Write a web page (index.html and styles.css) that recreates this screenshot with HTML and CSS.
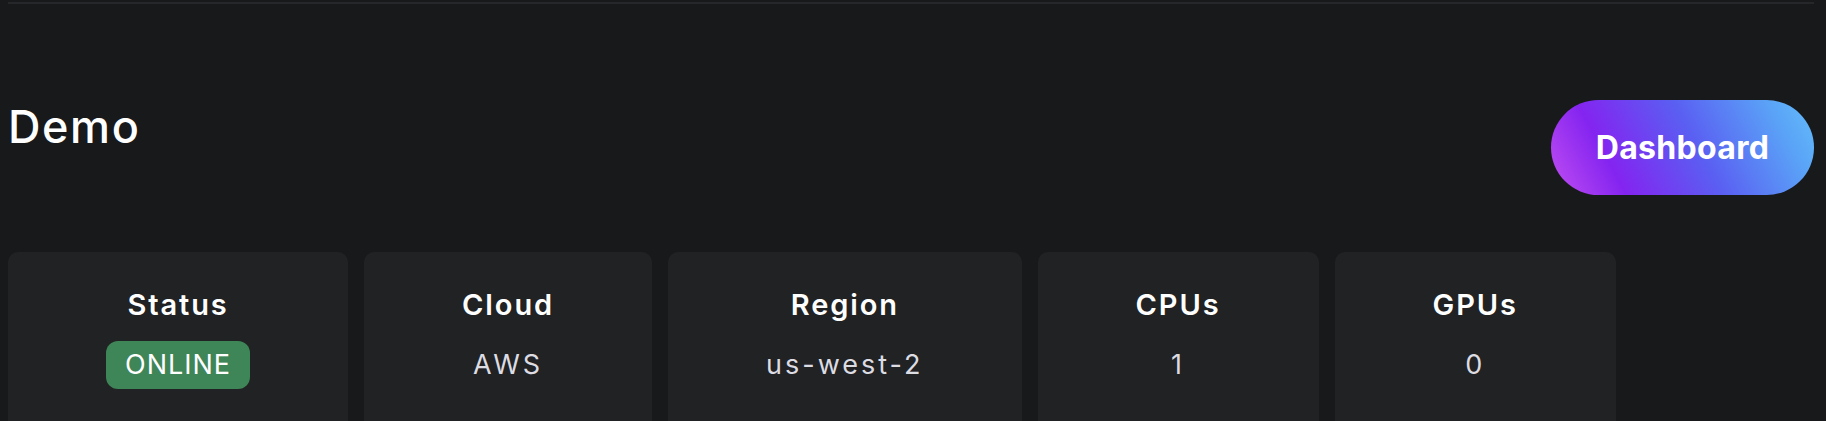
FILE: index.html
```html
<!DOCTYPE html>
<html lang="en">
<head>
<meta charset="utf-8">
<title>Demo</title>
<link rel="stylesheet" href="styles.css">
</head>
<body>
<div class="page">
  <div class="topline"></div>
  <header class="head">
    <h1 class="title">Demo</h1>
    <a class="btn" href="#">Dashboard</a>
  </header>
  <section class="cards">
    <div class="card">
      <div class="label">Status</div>
      <div class="value"><span class="badge">ONLINE</span></div>
    </div>
    <div class="card">
      <div class="label">Cloud</div>
      <div class="value">AWS</div>
    </div>
    <div class="card">
      <div class="label">Region</div>
      <div class="value">us-west-2</div>
    </div>
    <div class="card">
      <div class="label">CPUs</div>
      <div class="value">1</div>
    </div>
    <div class="card">
      <div class="label">GPUs</div>
      <div class="value">0</div>
    </div>
  </section>
</div>
</body>
</html>
```
FILE: styles.css
```css
* { box-sizing: border-box; }
html, body {
  margin: 0;
  background: #18191b;
  font-family: Inter, "Noto Sans", sans-serif;
  color: #ffffff;
  overflow: hidden;
}
.page {
  padding: 2px 12px 0 8px;
}
.topline {
  height: 2px;
  background: #26272a;
}
.head {
  display: flex;
  justify-content: space-between;
  align-items: flex-start;
  margin-top: 96px;
}
.title {
  margin: 0;
  font-size: 45px;
  line-height: 53px;
  font-weight: 500;
  letter-spacing: 1.6px;
}
.btn {
  display: block;
  height: 95px;
  width: 263px;
  border-radius: 48px;
  background: linear-gradient(62deg, #c24ff2 0%, #8424f0 24%, #5a5ff2 55%, #5aa3f7 85%, #63bdfa 100%);
  color: #fff;
  text-decoration: none;
  font-size: 32px;
  font-weight: 700;
  line-height: 95px;
  text-align: center;
  letter-spacing: 0.3px;
}
.cards {
  display: flex;
  gap: 16px;
  margin-top: 57px;
}
.card {
  background: #212224;
  border-radius: 10px;
  padding: 35px 98px 60px;
  display: flex;
  flex-direction: column;
  align-items: center;
}
.label {
  font-size: 29px;
  line-height: 35px;
  font-weight: 600;
  letter-spacing: 1.9px;
  white-space: nowrap;
}
.value {
  margin-top: 19px;
  height: 48px;
  display: flex;
  align-items: center;
  font-size: 27px;
  line-height: 32px;
  color: #dcdce2;
  letter-spacing: 3px;
  white-space: nowrap;
}
.badge {
  display: block;
  background: #3e8558;
  color: #fff;
  border-radius: 12px;
  padding: 8px 19px;
  letter-spacing: 1px;
}
```
